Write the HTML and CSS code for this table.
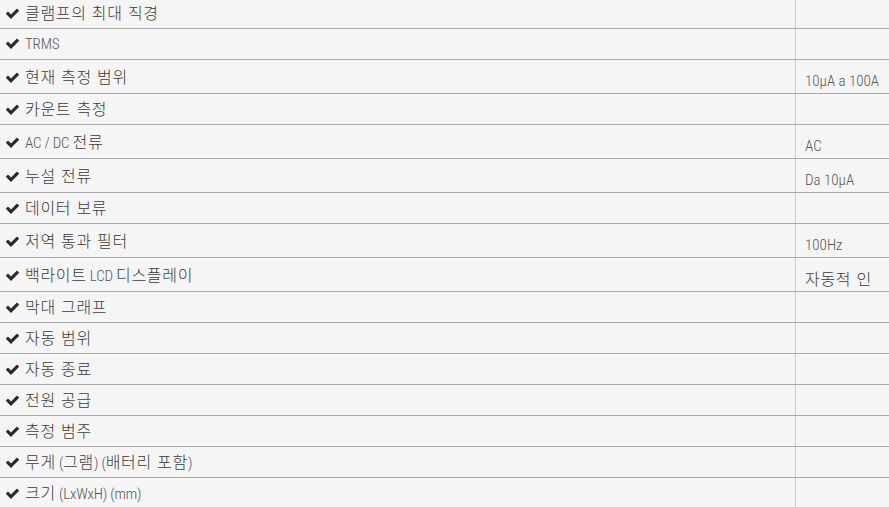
FILE: index.html
```html
<!DOCTYPE html>
<html lang="ko">
<head>
<meta charset="utf-8">
<link rel="stylesheet" href="styles.css">
</head>
<body>
<table class="spec">
<tbody>
<tr><td class="k"><svg class="chk" viewBox="0 0 1792 1792"><path d="M1671 566q0 40-28 68l-724 724-136 136q-28 28-68 28t-68-28l-136-136-362-362q-28-28-28-68t28-68l136-136q28-28 68-28t68 28l294 295 656-657q28-28 68-28t68 28l136 136q28 28 28 68z"/></svg><span class="ko">클램프의 최대 직경</span></td><td class="v"></td></tr>
<tr><td class="k"><svg class="chk" viewBox="0 0 1792 1792"><path d="M1671 566q0 40-28 68l-724 724-136 136q-28 28-68 28t-68-28l-136-136-362-362q-28-28-28-68t28-68l136-136q28-28 68-28t68 28l294 295 656-657q28-28 68-28t68 28l136 136q28 28 28 68z"/></svg><span>TRMS</span></td><td class="v"></td></tr>
<tr><td class="k"><svg class="chk" viewBox="0 0 1792 1792"><path d="M1671 566q0 40-28 68l-724 724-136 136q-28 28-68 28t-68-28l-136-136-362-362q-28-28-28-68t28-68l136-136q28-28 68-28t68 28l294 295 656-657q28-28 68-28t68 28l136 136q28 28 28 68z"/></svg><span class="ko">현재 측정 범위</span></td><td class="v full">10μA a 100A</td></tr>
<tr><td class="k"><svg class="chk" viewBox="0 0 1792 1792"><path d="M1671 566q0 40-28 68l-724 724-136 136q-28 28-68 28t-68-28l-136-136-362-362q-28-28-28-68t28-68l136-136q28-28 68-28t68 28l294 295 656-657q28-28 68-28t68 28l136 136q28 28 28 68z"/></svg><span class="ko">카운트 측정</span></td><td class="v"></td></tr>
<tr><td class="k"><svg class="chk" viewBox="0 0 1792 1792"><path d="M1671 566q0 40-28 68l-724 724-136 136q-28 28-68 28t-68-28l-136-136-362-362q-28-28-28-68t28-68l136-136q28-28 68-28t68 28l294 295 656-657q28-28 68-28t68 28l136 136q28 28 28 68z"/></svg><span>AC / DC <span class="ko">전류</span></span></td><td class="v full">AC</td></tr>
<tr><td class="k"><svg class="chk" viewBox="0 0 1792 1792"><path d="M1671 566q0 40-28 68l-724 724-136 136q-28 28-68 28t-68-28l-136-136-362-362q-28-28-28-68t28-68l136-136q28-28 68-28t68 28l294 295 656-657q28-28 68-28t68 28l136 136q28 28 28 68z"/></svg><span class="ko">누설 전류</span></td><td class="v full">Da 10μA</td></tr>
<tr><td class="k"><svg class="chk" viewBox="0 0 1792 1792"><path d="M1671 566q0 40-28 68l-724 724-136 136q-28 28-68 28t-68-28l-136-136-362-362q-28-28-28-68t28-68l136-136q28-28 68-28t68 28l294 295 656-657q28-28 68-28t68 28l136 136q28 28 28 68z"/></svg><span class="ko">데이터 보류</span></td><td class="v"></td></tr>
<tr><td class="k"><svg class="chk" viewBox="0 0 1792 1792"><path d="M1671 566q0 40-28 68l-724 724-136 136q-28 28-68 28t-68-28l-136-136-362-362q-28-28-28-68t28-68l136-136q28-28 68-28t68 28l294 295 656-657q28-28 68-28t68 28l136 136q28 28 28 68z"/></svg><span class="ko">저역 통과 필터</span></td><td class="v full">100Hz</td></tr>
<tr><td class="k"><svg class="chk" viewBox="0 0 1792 1792"><path d="M1671 566q0 40-28 68l-724 724-136 136q-28 28-68 28t-68-28l-136-136-362-362q-28-28-28-68t28-68l136-136q28-28 68-28t68 28l294 295 656-657q28-28 68-28t68 28l136 136q28 28 28 68z"/></svg><span><span class="ko">백라이트</span> LCD <span class="ko">디스플레이</span></span></td><td class="v full"><span class="ko">자동적 인</span></td></tr>
<tr><td class="k"><svg class="chk" viewBox="0 0 1792 1792"><path d="M1671 566q0 40-28 68l-724 724-136 136q-28 28-68 28t-68-28l-136-136-362-362q-28-28-28-68t28-68l136-136q28-28 68-28t68 28l294 295 656-657q28-28 68-28t68 28l136 136q28 28 28 68z"/></svg><span class="ko">막대 그래프</span></td><td class="v"></td></tr>
<tr><td class="k"><svg class="chk" viewBox="0 0 1792 1792"><path d="M1671 566q0 40-28 68l-724 724-136 136q-28 28-68 28t-68-28l-136-136-362-362q-28-28-28-68t28-68l136-136q28-28 68-28t68 28l294 295 656-657q28-28 68-28t68 28l136 136q28 28 28 68z"/></svg><span class="ko">자동 범위</span></td><td class="v"></td></tr>
<tr><td class="k"><svg class="chk" viewBox="0 0 1792 1792"><path d="M1671 566q0 40-28 68l-724 724-136 136q-28 28-68 28t-68-28l-136-136-362-362q-28-28-28-68t28-68l136-136q28-28 68-28t68 28l294 295 656-657q28-28 68-28t68 28l136 136q28 28 28 68z"/></svg><span class="ko">자동 종료</span></td><td class="v"></td></tr>
<tr><td class="k"><svg class="chk" viewBox="0 0 1792 1792"><path d="M1671 566q0 40-28 68l-724 724-136 136q-28 28-68 28t-68-28l-136-136-362-362q-28-28-28-68t28-68l136-136q28-28 68-28t68 28l294 295 656-657q28-28 68-28t68 28l136 136q28 28 28 68z"/></svg><span class="ko">전원 공급</span></td><td class="v"></td></tr>
<tr><td class="k"><svg class="chk" viewBox="0 0 1792 1792"><path d="M1671 566q0 40-28 68l-724 724-136 136q-28 28-68 28t-68-28l-136-136-362-362q-28-28-28-68t28-68l136-136q28-28 68-28t68 28l294 295 656-657q28-28 68-28t68 28l136 136q28 28 28 68z"/></svg><span class="ko">측정 범주</span></td><td class="v"></td></tr>
<tr><td class="k"><svg class="chk" viewBox="0 0 1792 1792"><path d="M1671 566q0 40-28 68l-724 724-136 136q-28 28-68 28t-68-28l-136-136-362-362q-28-28-28-68t28-68l136-136q28-28 68-28t68 28l294 295 656-657q28-28 68-28t68 28l136 136q28 28 28 68z"/></svg><span><span class="ko">무게</span> (<span class="ko">그램</span>) (<span class="ko">배터리 포함</span>)</span></td><td class="v"></td></tr>
<tr><td class="k"><svg class="chk" viewBox="0 0 1792 1792"><path d="M1671 566q0 40-28 68l-724 724-136 136q-28 28-68 28t-68-28l-136-136-362-362q-28-28-28-68t28-68l136-136q28-28 68-28t68 28l294 295 656-657q28-28 68-28t68 28l136 136q28 28 28 68z"/></svg><span><span class="ko">크기</span> (LxWxH) (mm)</span></td><td class="v"></td></tr>
</tbody>
</table>
</body>
</html>
```
FILE: styles.css
```css
html, body {
  margin: 0;
  padding: 0;
  background: #f5f5f5;
  overflow: hidden;
}
.spec {
  width: 100%;
  border-collapse: collapse;
  margin-top: -2px;
  font-family: "Roboto", "Liberation Sans Narrow", "Noto Sans CJK KR", sans-serif;
  font-stretch: condensed;
  font-weight: 300;
  color: #555;
  font-size: 15px;
}
.spec td {
  border-bottom: 1px solid #a9a9a9;
  padding: 0;
}
.spec td.k {
  height: 30px;
  vertical-align: middle;
  line-height: 20px;
  padding-left: 5px;
  white-space: nowrap;
  letter-spacing: -0.2px;
}
.spec td.v {
  width: 84px;
  border-left: 1px solid #cccccc;
  padding: 0 0 0 9px;
  vertical-align: middle;
  font-size: 15px;
}
.spec td.v.full {
  height: 34px;
  padding-top: 8px;
  box-sizing: border-box;
  line-height: 20px;
}
.chk {
  width: 15px;
  height: 15px;
  fill: #2b2b2b;
  vertical-align: -2px;
  margin-right: 5px;
}
.ko {
  font-family: "Noto Sans CJK KR", sans-serif;
  font-size: 16px;
  color: #3a3a3a;
  font-weight: 300;
  font-stretch: normal;
  letter-spacing: 0.7px;
}
```
